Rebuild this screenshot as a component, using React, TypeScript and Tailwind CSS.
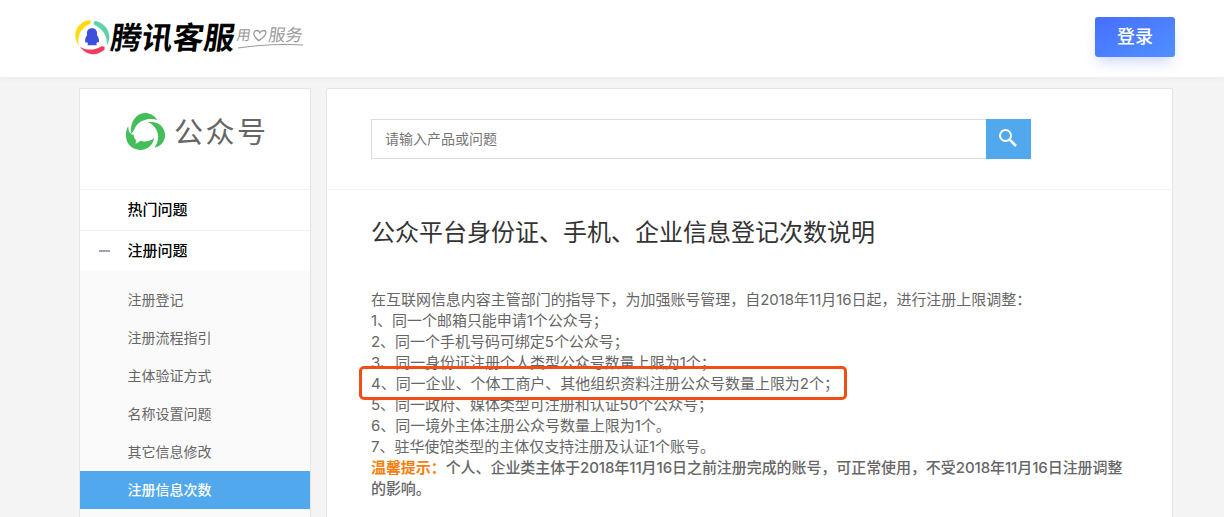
import React from 'react';

const subItems = [
  '注册登记',
  '注册流程指引',
  '主体验证方式',
  '名称设置问题',
  '其它信息修改',
  '注册信息次数',
];

const rules = [
  '在互联网信息内容主管部门的指导下，为加强账号管理，自2018年11月16日起，进行注册上限调整：',
  '1、同一个邮箱只能申请1个公众号；',
  '2、同一个手机号码可绑定5个公众号；',
  '3、同一身份证注册个人类型公众号数量上限为1个；',
  '4、同一企业、个体工商户、其他组织资料注册公众号数量上限为2个；',
  '5、同一政府、媒体类型可注册和认证50个公众号；',
  '6、同一境外主体注册公众号数量上限为1个。',
  '7、驻华使馆类型的主体仅支持注册及认证1个账号。',
];

const PenguinLogo: React.FC = () => (
  <svg className="w-[35px] h-[35px] shrink-0" viewBox="44 29 105 105">
    <path d="M87 30C62 32 44 53 45 78C46 89 50 100 56 106C48 82 60 53 88 41C94 38 92 30 87 30Z" fill="#fbdc0a" />
    <path d="M107 32C132 38 148 60 147 82C146 91 144 99 140 105C141 81 130 57 104 45C97 41 100 31 107 32Z" fill="#5fd3a8" />
    <path d="M59 109C78 121 102 120 121 109C130 104 137 112 131 119C110 138 78 136 59 109Z" fill="#f33b5e" />
    <path d="M95 54C86 54 80 60 80 68V75C75 82 73 90 75 96C76 98 78 97 80 95C81 98 82 100 84 101C80 103 80 105 85 105H106C111 105 111 103 107 101C109 99 110 97 111 95C113 97 115 97 116 94C117 87 114 80 110 75V68C110 60 104 54 95 54Z" fill="#3c50dc" />
  </svg>
);

const AccountIcon: React.FC = () => (
  <svg className="w-[39px] h-[37px] shrink-0" viewBox="168 99 117 111" fill="#44bd5b">
    <path d="M183 161C179 127 198 100 224 99C240 99 254 107 262 120C243 114 218 118 204 131C193 141 193 154 183 161Z" />
    <path d="M233 127C261 121 284 139 285 163C286 184 273 200 253 203C266 187 268 166 259 149C254 139 244 130 233 127Z" />
    <path d="M175 138C174 153 180 163 191 165C191 171 194 176 198 180L197 192L211 183C228 187 243 182 253 174C248 198 230 210 211 210C185 209 167 191 168 165C168 155 170 146 175 138Z" />
  </svg>
);

const App: React.FC = () => {
  return (
    <div className="h-[517px] overflow-hidden bg-[#f4f4f4] font-['Inter','Noto_Sans_CJK_SC',sans-serif] text-[#666]">
      {/* Header */}
      <header className="flex h-[77px] items-start justify-between bg-white pl-[75px] pr-[49px] shadow-[0_2px_6px_rgba(0,0,0,0.04)]">
        <div className="flex pt-[20px]">
          <PenguinLogo />
          <div className="ml-[1px] h-[35px] w-[126px] -skew-x-8 whitespace-nowrap text-[31px] font-bold leading-[35px] text-black">
            腾讯客服
          </div>
          <div className="relative h-[35px] w-[67px]">
            <div className="flex -skew-x-8 items-center pt-[6px] text-[14px] leading-[18px] text-[#999]">
              <span>用</span>
              <svg className="mx-[1px] h-[13px] w-[16px]" viewBox="0 0 15 14" fill="none" stroke="#999" strokeWidth="1.4">
                <path d="M7.5 12.5C4 10 1 7.500 1 4.500C1 1 6 .5 7.500 4C9.500 .5 14 1 14 4.500C14 7.500 11 10 7.500 12.500Z" />
              </svg>
              <span className="text-[17px]">服务</span>
            </div>
            <svg className="absolute left-0 top-[23px] h-[6px] w-[67px]" viewBox="0 0 67 6" fill="none" stroke="#999">
              <path d="M1 5Q35 0 66 2" />
            </svg>
          </div>
        </div>
        <button className="mt-[17px] h-[40px] w-[80px] rounded-[3px] bg-linear-to-br from-[#486eff] to-[#5090ff] pb-px text-[18px] font-medium text-white shadow-[0_8px_14px_-4px_rgba(72,110,255,0.3)]">
          登录
        </button>
      </header>

      <div className="flex items-start gap-[15px] pl-[79px] pt-[11px]">
        {/* Sidebar */}
        <aside className="h-[440px] w-[232px] shrink-0 border border-[#e4e4e4] bg-white">
          <div className="flex h-[101px] items-start border-b border-[#f2f2f2] pl-[46px] pt-[24px]">
            <AccountIcon />
            <span className="ml-[9px] whitespace-nowrap text-[29px] leading-[39px] tracking-[2.5px]">公众号</span>
          </div>
          <div className="h-[41px] border-b border-[#f2f2f2] pl-[47.500px] text-[15px] font-medium leading-[40px] text-black">热门问题</div>
          <div className="flex h-[40px] items-center pl-[19px] text-[15px] font-medium text-black">
            <span className="mr-[17.500px] h-[2px] w-[11px] bg-[#9ba5b4]"></span>
            注册问题
          </div>
          <ul className="h-[260px] bg-[#fafafa] pt-[10px] text-[14px] leading-[38px]">
            {subItems.map((item) => (
              <li
                key={item}
                className={item === '注册信息次数' ? 'h-[38px] bg-[#51a8ec] pl-[47.500px] font-medium text-white' : 'h-[38px] pl-[47.500px]'}
              >
                {item}
              </li>
            ))}
          </ul>
        </aside>

        {/* Content */}
        <main className="h-[440px] w-[847px] shrink-0 rounded-t-[2px] border border-[#e4e4e4] bg-white">
          <div className="flex h-[101px] border-b border-[#f2f2f2] pl-[44px] pt-[30px]">
            <input
              className="h-[40px] w-[615px] border border-r-0 border-[#ddd] px-[13px] pb-[2px] text-[14px] placeholder:text-[#757575]"
              placeholder="请输入产品或问题"
            />
            <button className="flex h-[40px] w-[45px] items-start bg-[#51a8ec] pl-[13px] pt-[10px]">
              <svg className="h-[18px] w-[18px]" viewBox="0 0 18 18" fill="none" stroke="#fff" strokeWidth="2">
                <circle cx="6.500" cy="6.500" r="5.500" />
                <path d="M10.500 10.500L17 17" strokeWidth="2.500" />
              </svg>
            </button>
          </div>
          <div className="pl-[44px] pr-[44px] pt-[25px]">
            <h1 className="text-[24px] leading-[36px] text-[#333]">公众平台身份证、手机、企业信息登记次数说明</h1>
            <div className="relative mt-[38px] text-[15px] leading-[21px] tracking-[-0.03px]">
              {rules.map((rule) => (
                <p key={rule} className="whitespace-nowrap">{rule}</p>
              ))}
              <p className="whitespace-nowrap font-medium tracking-[-0.07px]">
                <span className="font-bold text-[#f5800f]">温馨提示：</span>
                个人、企业类主体于2018年11月16日之前注册完成的账号，可正常使用，不受2018年11月16日注册调整
                <br />
                的影响。
              </p>
              {/* Highlight around rule 4 */}
              <div className="absolute -left-[12px] top-[77px] h-[34px] w-[488px] rounded-[5px] border-3 border-[#f04e16]"></div>
            </div>
          </div>
        </main>
      </div>
    </div>
  );
};

export default App;
